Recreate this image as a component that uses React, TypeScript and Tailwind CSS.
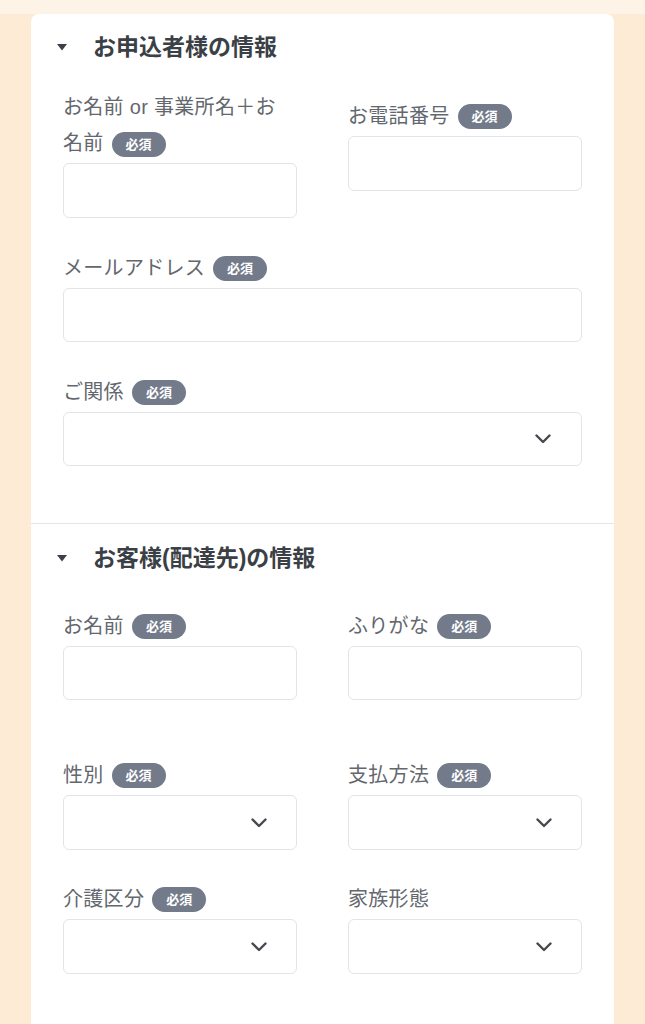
import React from "react";

const font = { fontFamily: '"Liberation Sans", "Noto Sans CJK JP", sans-serif' };

function Badge() {
  return (
    <span className="ml-2 inline-flex h-[25px] w-[54px] items-center justify-center rounded-full bg-[#737b8b] align-middle text-[13px] font-bold leading-none tracking-normal text-white">
      必須
    </span>
  );
}

function Label({ text, required = true }: { text: string; required?: boolean }) {
  return (
    <div className="flex h-[36px] items-center text-[20px] tracking-[0.3px] text-[#63676e]">
      <span>{text}</span>
      {required && <Badge />}
    </div>
  );
}

function Input() {
  return <div className="mt-[2px] h-[55px] rounded-md border border-[#e1e4e9] bg-white" />;
}

function Chevron() {
  return (
    <svg width="16" height="10" viewBox="0 0 16 10" fill="none">
      <path d="M1.5 1.5 L8 8 L14.5 1.5" stroke="#45494f" strokeWidth="2.4" strokeLinecap="round" strokeLinejoin="round" />
    </svg>
  );
}

function Select() {
  return (
    <div className="mt-[2px] flex h-[55px] items-center justify-end rounded-md border border-[#e1e4e9] bg-white pr-[29px]">
      <Chevron />
    </div>
  );
}

function Heading({ text }: { text: string }) {
  return (
    <div className="flex h-[28px] items-center pl-[26px]">
      <svg width="10" height="7" viewBox="0 0 10 7" className="mr-[26px]">
        <polygon points="0,0 10,0 5,6.5" fill="#3b3f46" />
      </svg>
      <span className="text-[23px] font-bold text-[#3b3f46]">{text}</span>
    </div>
  );
}

export default function App() {
  return (
    <div className="min-h-screen bg-[#fdebd5]" style={font}>
      <div className="h-[14px] bg-[#fdf3e7]" />
      <div className="px-[31px]">
        <div className="overflow-hidden rounded-t-lg bg-white">
          {/* Section 1 */}
          <div className="px-[32px] pb-[57px] pt-[19px]">
            <div className="-mx-[32px]">
              <Heading text="お申込者様の情報" />
            </div>
            <div className="mt-[28px] grid grid-cols-2 gap-x-[51px]">
              <div>
                <div className="text-[20px] leading-[36px] tracking-[0.3px] text-[#63676e]">
                  お名前 or 事業所名＋お
                  <br />
                  名前
                  <Badge />
                </div>
                <Input />
              </div>
              <div className="pt-[9px]">
                <Label text="お電話番号" />
                <Input />
              </div>
            </div>
            <div className="mt-[32px]">
              <Label text="メールアドレス" />
              <div className="mt-[2px] h-[54px] rounded-md border border-[#e1e4e9] bg-white" />
            </div>
            <div className="mt-[32px]">
              <Label text="ご関係" />
              <div className="mt-[2px] flex h-[54px] items-center justify-end rounded-md border border-[#e1e4e9] bg-white pr-[30px]">
                <Chevron />
              </div>
            </div>
          </div>
          {/* Section 2 */}
          <div className="border-t border-[#e3e6ea] px-[32px] pb-[60px] pt-[20px]">
            <div className="-mx-[32px]">
              <Heading text="お客様(配達先)の情報" />
            </div>
            <div className="mt-[36px] grid grid-cols-2 gap-x-[51px]">
              <div>
                <Label text="お名前" />
                <div className="mt-[2px] h-[54px] rounded-md border border-[#e1e4e9] bg-white" />
              </div>
              <div>
                <Label text="ふりがな" />
                <div className="mt-[2px] h-[54px] rounded-md border border-[#e1e4e9] bg-white" />
              </div>
            </div>
            <div className="mt-[57px] grid grid-cols-2 gap-x-[51px]">
              <div>
                <Label text="性別" />
                <Select />
              </div>
              <div>
                <Label text="支払方法" />
                <Select />
              </div>
            </div>
            <div className="mt-[31px] grid grid-cols-2 gap-x-[51px]">
              <div>
                <Label text="介護区分" />
                <Select />
              </div>
              <div>
                <Label text="家族形態" required={false} />
                <Select />
              </div>
            </div>
          </div>
        </div>
      </div>
    </div>
  );
}
